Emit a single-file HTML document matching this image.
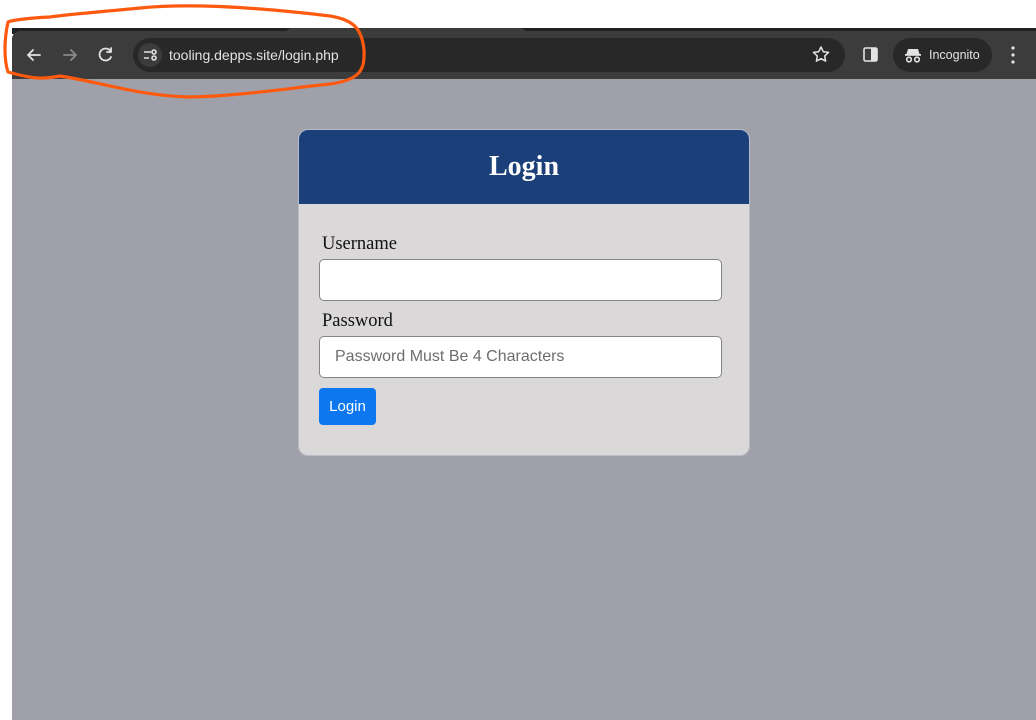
<!DOCTYPE html>
<html><head><meta charset="utf-8"><style>
*{margin:0;padding:0;box-sizing:border-box}
body{width:1036px;height:720px;background:#fff;position:relative;overflow:hidden;font-family:"Liberation Sans",sans-serif}
.strip{position:absolute;left:12px;top:28px;width:1024px;height:6px;background:#202124}
.tab{position:absolute;left:286px;top:28px;width:240px;height:6px;background:#3a3a3a;border-radius:6px 6px 0 0}
.bar{position:absolute;left:12px;top:31px;width:1024px;height:48px;background:#3c3c3c;border-radius:8px 0 0 0}
.url{position:absolute;left:133px;top:38px;width:712px;height:34px;background:#282828;border-radius:17px}
.url .ic{position:absolute;left:5px;top:5px;width:24px;height:24px;border-radius:12px;background:#3c3c3c}
.url span{position:absolute;left:36px;top:9px;color:#e3e3e3;font-size:14px}
.inc{position:absolute;left:893px;top:38px;width:99px;height:34px;background:#282828;border-radius:17px;color:#e3e3e3;font-size:12.5px}
.page{position:absolute;left:12px;top:79px;width:1024px;height:641px;background:#a0a0aa}
.card{position:absolute;left:298px;top:129px;width:452px;height:327px;background:#dad8d9;border:1px solid #b9bcc7;border-radius:10px;overflow:hidden}
.hd{height:74px;background:#1b3f79;color:#fff;font:bold 28px "Liberation Serif",serif;text-align:center;line-height:74px}
.lbl{position:absolute;left:23px;font:18.5px "Liberation Serif",serif;color:#111}
.in{position:absolute;left:20px;width:403px;height:42px;background:#fff;border:1px solid #858585;border-radius:5px}
.in span{position:absolute;left:15px;top:11px;color:#6d6d6d;font-size:16px}
.btn{position:absolute;left:20px;top:258px;width:57px;height:37px;background:#0d77f0;border-radius:4px;color:#fff;font-size:15px;text-align:center;line-height:37px}
</style></head><body>
<div class="strip"></div><div class="tab"></div>
<div class="bar"></div>
<svg style="position:absolute;left:0;top:0" width="1036" height="80">
<g fill="none" stroke="#e3e3e3" stroke-width="1.8" stroke-linecap="round" stroke-linejoin="round">
<path d="M40 55H28M33 50l-5 5 5 5"/>
<path d="M64 55h12M71 50l5 5-5 5" stroke="#8a8a8a"/>
<path d="M111 52a6 6 0 1 0 0 5M111 48v4h-4"/>
<rect x="864" y="48" width="13" height="13" rx="1.5" stroke-width="1.6"/>
</g>
<rect x="871" y="48" width="6" height="13" fill="#e3e3e3"/>
<g fill="#e3e3e3"><circle cx="1013" cy="48" r="1.6"/><circle cx="1013" cy="55" r="1.6"/><circle cx="1013" cy="62" r="1.6"/></g>
</svg>
<div class="url"><div class="ic"><svg width="24" height="24"><g stroke="#e3e3e3" stroke-width="1.6" fill="none"><path d="M6 9h7M6 15h5"/><circle cx="16" cy="9" r="2"/><circle cx="16" cy="15" r="2"/></g></svg></div><span>tooling.depps.site/login.php</span></div>
<svg style="position:absolute;left:810px;top:44px" width="24" height="22"><path d="M11 3l2.3 4.7 5.2.7-3.8 3.6.9 5.1-4.6-2.4-4.6 2.4.9-5.1-3.8-3.6 5.2-.7z" fill="none" stroke="#e3e3e3" stroke-width="1.5" stroke-linejoin="round"/></svg>
<div class="inc"><svg style="position:absolute;left:11px;top:9px" width="18" height="16"><g fill="#e3e3e3"><path d="M4 2h10l1.5 5h-13z"/><rect x="1" y="7" width="16" height="1.8"/></g><g fill="none" stroke="#e3e3e3" stroke-width="1.6"><circle cx="5" cy="12.5" r="2.3"/><circle cx="13" cy="12.5" r="2.3"/></g></svg><span style="position:absolute;left:36px;top:10px">Incognito</span></div>
<div class="page"></div>
<div class="card">
<div class="hd">Login</div>
<div class="lbl" style="top:104px">Username</div>
<div class="in" style="top:129px"></div>
<div class="lbl" style="top:181px">Password</div>
<div class="in" style="top:206px"><span>Password Must Be 4 Characters</span></div>
<div class="btn">Login</div>
</div>
<svg style="position:absolute;left:0;top:0" width="400" height="110"><path d="M8 22 C4 40 4 60 8 72 C30 78 40 80 60 76 C100 82 140 96 190 97 C240 96 290 88 330 84 C360 80 365 70 364 50 C362 30 355 20 330 16 C280 10 200 2 140 8 C100 12 70 14 50 17 C30 18 12 20 8 22 Z" fill="none" stroke="#fd5a0f" stroke-width="3.2" stroke-linejoin="round"/></svg>
</body></html>
